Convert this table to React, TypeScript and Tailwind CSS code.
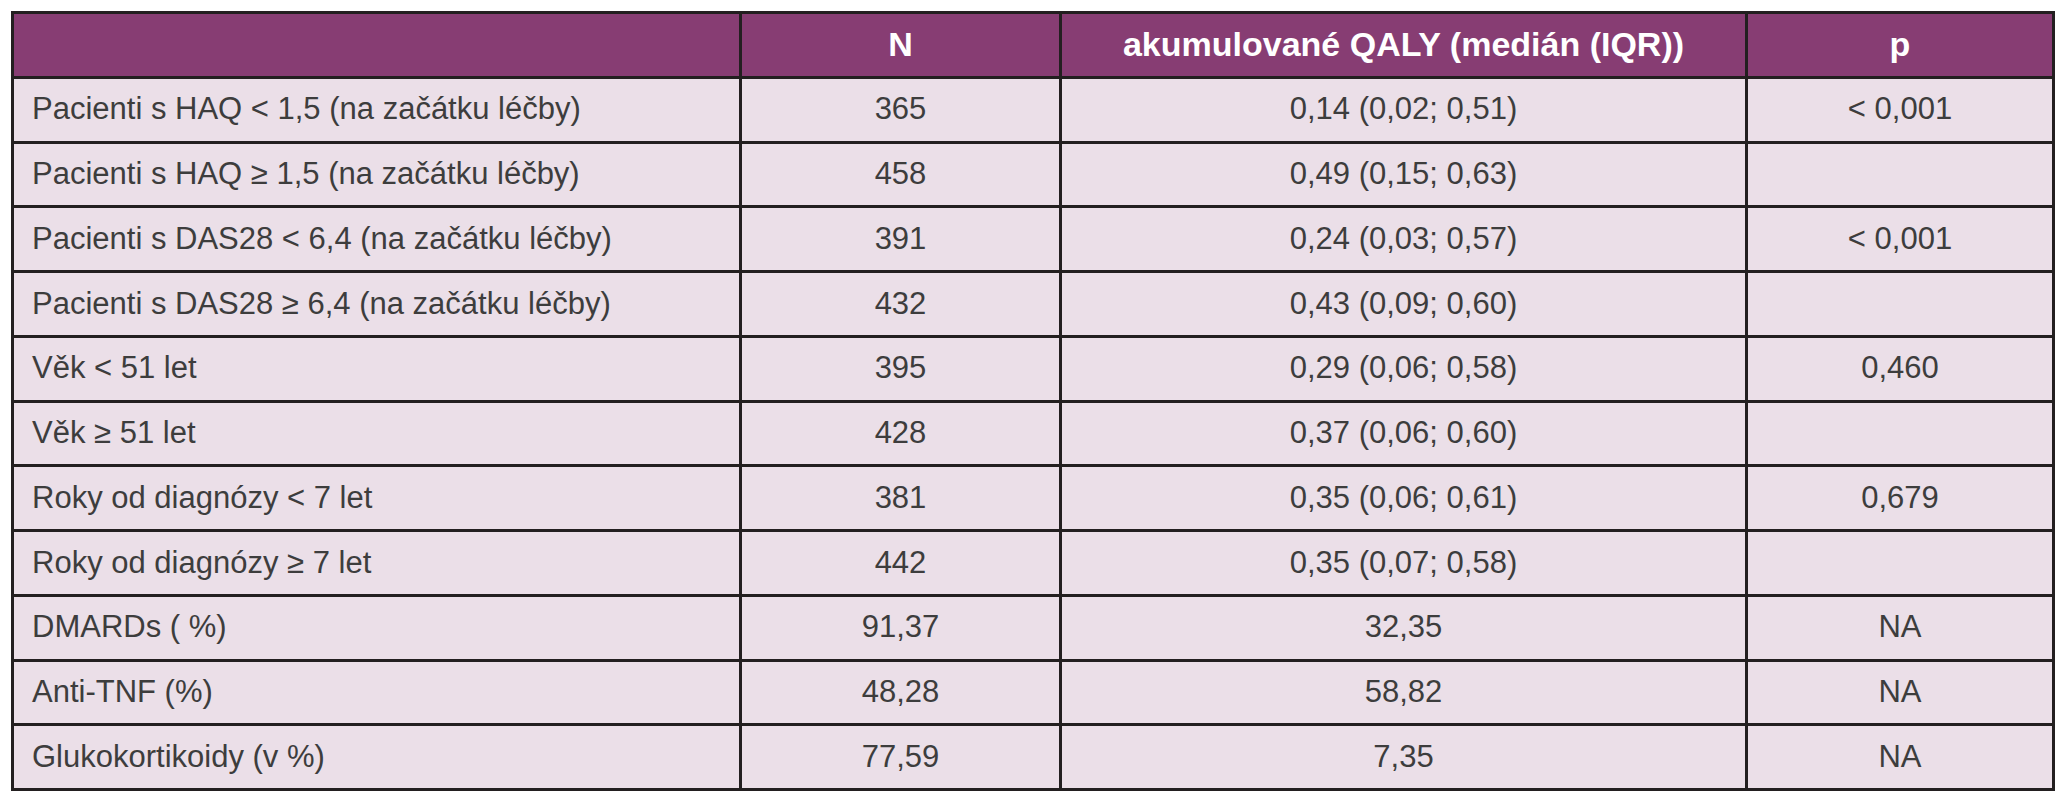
import React from "react";

const rows: [string, string, string, string][] = [
  ["Pacienti s HAQ < 1,5 (na začátku léčby)", "365", "0,14 (0,02; 0,51)", "< 0,001"],
  ["Pacienti s HAQ ≥ 1,5 (na začátku léčby)", "458", "0,49 (0,15; 0,63)", ""],
  ["Pacienti s DAS28 < 6,4 (na začátku léčby)", "391", "0,24 (0,03; 0,57)", "< 0,001"],
  ["Pacienti s DAS28 ≥ 6,4 (na začátku léčby)", "432", "0,43 (0,09; 0,60)", ""],
  ["Věk < 51 let", "395", "0,29 (0,06; 0,58)", "0,460"],
  ["Věk ≥ 51 let", "428", "0,37 (0,06; 0,60)", ""],
  ["Roky od diagnózy < 7 let", "381", "0,35 (0,06; 0,61)", "0,679"],
  ["Roky od diagnózy ≥ 7 let", "442", "0,35 (0,07; 0,58)", ""],
  ["DMARDs ( %)", "91,37", "32,35", "NA"],
  ["Anti-TNF (%)", "48,28", "58,82", "NA"],
  ["Glukokortikoidy (v %)", "77,59", "7,35", "NA"],
];

export default function App() {
  return (
    <div className="min-h-[800px] w-[2072px] bg-white pl-[11px] pt-[11px]">
      <table className="w-[2041px] table-fixed border-collapse border-[3px] border-[#231f20] font-['Liberation_Sans',Arial,sans-serif]">
        <colgroup>
          <col className="w-[728px]" />
          <col className="w-[320px]" />
          <col className="w-[686px]" />
          <col className="w-[307px]" />
        </colgroup>
        <thead>
          <tr className="h-[64.75px] bg-[#873d73] text-[34px] font-bold text-white">
            <th className="border-[3px] border-[#231f20]"></th>
            <th className="border-[3px] border-[#231f20] text-center">N</th>
            <th className="border-[3px] border-[#231f20] text-center">akumulované QALY (medián (IQR))</th>
            <th className="border-[3px] border-[#231f20] text-center">p</th>
          </tr>
        </thead>
        <tbody>
          {rows.map((r, i) => (
            <tr key={i} className="h-[64.75px] bg-[#ebdfe8] text-[31px] text-[#3d3d3d]">
              <td className="border-[3px] border-[#231f20] pl-[18px] text-left whitespace-nowrap">{r[0]}</td>
              <td className="border-[3px] border-[#231f20] text-center">{r[1]}</td>
              <td className="border-[3px] border-[#231f20] text-center">{r[2]}</td>
              <td className="border-[3px] border-[#231f20] text-center">{r[3]}</td>
            </tr>
          ))}
        </tbody>
      </table>
    </div>
  );
}
